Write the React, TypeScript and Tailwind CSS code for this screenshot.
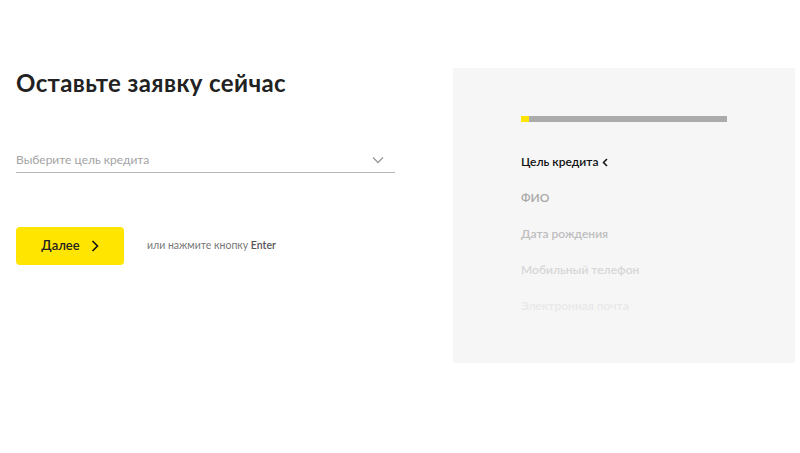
import React from "react";

const steps = [
  { label: "ФИО", color: "text-[#a9a9a9]" },
  { label: "Дата рождения", color: "text-[#bdbdbd]" },
  { label: "Мобильный телефон", color: "text-[#d6d6d6]" },
  { label: "Электронная почта", color: "text-[#e8e8e8]" },
];

const App = () => {
  return (
    <div className="h-[453px] w-[800px] overflow-hidden bg-white font-['Lato',sans-serif]">
      <div className="flex pt-[68px]">
        <div className="ml-4 w-[379px]">
          <h1 className="mt-[1px] text-[24px] leading-[28px] font-bold tracking-[0.4px] text-[#222]">
            Оставьте заявку сейчас
          </h1>
          <div className="mt-[53px] flex items-center justify-between border-b border-[#b5b5b5] pb-[2px]">
            <span className="text-[12px] leading-[20px] text-[#a3a3a3]">
              Выберите цель кредита
            </span>
            <svg
              width="12"
              height="8"
              viewBox="0 0 12 8"
              fill="none"
              className="mr-[11px]"
            >
              <path d="M1 1.5l5 5 5-5" stroke="#9a9a9a" strokeWidth="1.3" />
            </svg>
          </div>
          <div className="mt-[54px] flex items-center">
            <button className="flex h-[38px] w-[108px] items-center justify-center gap-[11px] rounded-[4px] bg-[#ffe500] text-[13px] font-semibold text-[#222]">
              <span>Далее</span>
              <svg width="8" height="12" viewBox="0 0 8 12" fill="none">
                <path d="M1.5 1l5 5-5 5" stroke="#111" strokeWidth="1.6" />
              </svg>
            </button>
            <span className="ml-[23px] text-[10.5px] text-[#777]">
              или нажмите кнопку <span className="font-semibold text-[#555]">Enter</span>
            </span>
          </div>
        </div>
        <div className="ml-[58px] h-[295px] w-[342px] bg-[#f6f6f6] pt-[48px] pl-[68px]">
          <div className="flex h-[6px] w-[206px] bg-[#ababab]">
            <div className="w-[8px] bg-[#ffe500]" />
          </div>
          <div className="mt-[32px] flex items-center gap-[4px] text-[12px] leading-[16px] font-semibold text-[#111]">
            <span>Цель кредита</span>
            <svg width="6" height="9" viewBox="0 0 6 9" fill="none">
              <path d="M5 1L1.5 4.5 5 8" stroke="#111" strokeWidth="1.5" />
            </svg>
          </div>
          {steps.map((s) => (
            <div
              key={s.label}
              className={`mt-[20px] text-[12px] leading-[16px] font-semibold ${s.color}`}
            >
              {s.label}
            </div>
          ))}
        </div>
      </div>
    </div>
  );
};

export default App;
